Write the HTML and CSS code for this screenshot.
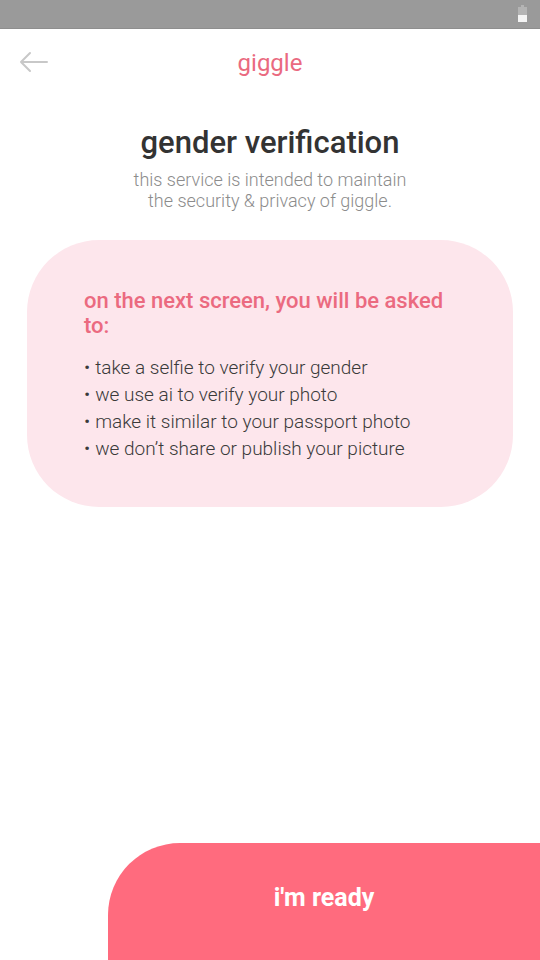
FILE: index.html
```html
<!DOCTYPE html>
<html>
<head>
<meta charset="utf-8">
<link rel="stylesheet" href="styles.css">
</head>
<body>
<div class="screen">
  <div class="statusbar">
    <svg class="battery" width="9" height="17" viewBox="0 0 9 17">
      <rect x="3" y="0" width="3" height="2" fill="#b4b4b4"/>
      <rect x="0" y="2" width="9" height="15" fill="#b4b4b4"/>
      <rect x="0" y="10" width="9" height="7" fill="#f4f4f4"/>
    </svg>
  </div>
  <header class="topbar">
    <svg class="back" width="30" height="22" viewBox="0 0 30 22">
      <path d="M29 11H3M12 2L3 11l9 9" fill="none" stroke="#c8c8c8" stroke-width="2" stroke-linecap="round" stroke-linejoin="round"/>
    </svg>
    <div class="brand">giggle</div>
  </header>
  <main class="content">
    <h1 class="title">gender verification</h1>
    <p class="subtitle">this service is intended to maintain<br>the security &amp; privacy of giggle.</p>
    <section class="card">
      <h2 class="card-title">on the next screen, you will be asked to:</h2>
      <ul class="list">
        <li>take a selfie to verify your gender</li>
        <li>we use ai to verify your photo</li>
        <li>make it similar to your passport photo</li>
        <li>we don’t share or publish your picture</li>
      </ul>
    </section>
  </main>
  <div class="footer">
    <button class="ready">i'm ready</button>
  </div>
</div>
</body>
</html>
```
FILE: styles.css
```css
* { box-sizing: border-box; }
html, body { margin: 0; padding: 0; }
body {
  width: 540px;
  height: 960px;
  overflow: hidden;
  background: #fff;
  font-family: Roboto, "Liberation Sans", sans-serif;
}
.screen {
  width: 540px;
  height: 960px;
  display: flex;
  flex-direction: column;
}
.statusbar {
  height: 29px;
  flex: none;
  background: #9a9a9a;
  border-bottom: 1px solid #8e8e8e;
  display: flex;
  justify-content: flex-end;
  align-items: flex-start;
  padding: 5px 13px 0 0;
}
.topbar {
  height: 66px;
  flex: none;
  position: relative;
  display: flex;
  align-items: center;
  justify-content: center;
}
.back {
  position: absolute;
  left: 18px;
  top: 22px;
}
.brand {
  color: #ea6a80;
  font-size: 24px;
  margin-top: 1px;
}
.content {
  flex: 1;
  display: flex;
  flex-direction: column;
  align-items: center;
}
.title {
  margin: 28px 0 0;
  font-size: 31px;
  font-weight: 500;
  color: #333;
  line-height: 40px;
}
.subtitle {
  margin: 6px 0 0;
  text-align: center;
  color: #8c8c8c;
  font-size: 18px;
  line-height: 21px;
  font-weight: 300;
}
.card {
  margin-top: 29px;
  width: 486px;
  height: 267px;
  align-self: flex-start;
  margin-left: 27px;
  background: #fde6ec;
  border-radius: 72px;
  padding: 48px 60px 0 57px;
}
.card-title {
  margin: 0;
  color: #eb6a80;
  font-size: 22px;
  font-weight: 500;
  line-height: 25px;
}
.list {
  list-style: none;
  margin: 16px 0 0;
  padding: 0;
  color: #3a3a3a;
  font-size: 19px;
  font-weight: 300;
  line-height: 27px;
}
.list li::before {
  content: "•";
  margin-right: 5px;
}
.footer {
  flex: none;
  display: flex;
  justify-content: flex-end;
}
.ready {
  width: 432px;
  height: 117px;
  border: none;
  margin: 0;
  background: #ff6b7e;
  border-top-left-radius: 72px;
  color: #fff;
  font-family: Roboto, "Liberation Sans", sans-serif;
  font-size: 25px;
  font-weight: 700;
  padding: 0 0 8px 0;
}
```
